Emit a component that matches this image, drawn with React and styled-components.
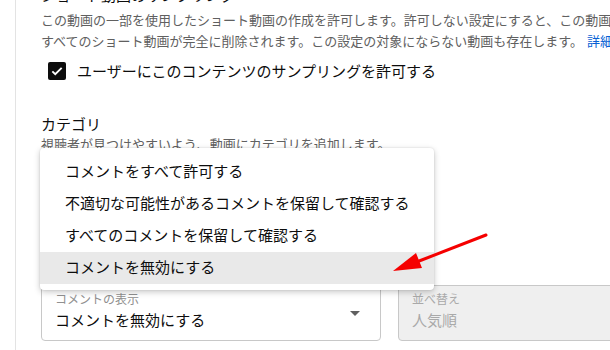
import React from 'react';
import styled, { createGlobalStyle } from 'styled-components';

const GlobalStyle = createGlobalStyle`
  html, body {
    margin: 0;
    padding: 0;
    background: #fff;
    overflow: hidden;
  }
  body {
    font-family: "Noto Sans CJK JP", "Noto Sans", sans-serif;
    color: #0d0d0d;
  }
`;

const Page = styled.div`
  position: relative;
  width: 610px;
  height: 350px;
  overflow: hidden;
`;

const Column = styled.div`
  margin-left: 15px;
  height: 100%;
  border-left: 1px solid #e3e3e3;
  padding-left: 25px;
  display: flex;
  flex-direction: column;
`;

const Heading = styled.div`
  margin-top: -17px;
  font-size: 15px;
  line-height: 24px;
  white-space: nowrap;
`;

const Description = styled.div`
  margin-top: 2px;
  font-size: 13px;
  line-height: 21px;
  color: #606060;
  white-space: nowrap;
`;

const Link = styled.a`
  color: #065fd4;
  text-decoration: none;
  margin-left: 4px;
`;

const CheckRow = styled.label`
  margin-top: 10px;
  padding-left: 7px;
  display: flex;
  align-items: center;
  gap: 11px;
  font-size: 15px;
  line-height: 20px;
`;

const CheckBox = styled.span`
  width: 18px;
  height: 18px;
  border-radius: 2px;
  background: #0d0d0d;
  display: flex;
  align-items: center;
  justify-content: center;
`;

const SectionTitle = styled.div`
  margin-top: 32px;
  font-size: 15px;
  line-height: 22px;
`;

const SectionHint = styled.div`
  font-size: 13px;
  line-height: 18px;
  color: #606060;
`;

const FieldRow = styled.div`
  margin-top: 132px;
  display: flex;
  gap: 17px;
`;

const Field = styled.div`
  position: relative;
  box-sizing: border-box;
  flex: ${({ $width }) => ($width ? `0 0 ${$width}px` : '0 0 240px')};
  height: 56px;
  border: 1px solid #c8c8c8;
  border-radius: 4px;
  padding: 5px 0 0 13px;
  background: ${({ $disabled }) => ($disabled ? '#efefef' : '#fff')};
  color: ${({ $disabled }) => ($disabled ? '#a9a9a9' : '#0d0d0d')};
`;

const FieldLabel = styled.div`
  font-size: 12px;
  line-height: 16px;
  color: ${({ $disabled }) => ($disabled ? '#a9a9a9' : '#909090')};
`;

const FieldValue = styled.div`
  margin-top: 1px;
  font-size: 15px;
  line-height: 24px;
`;

const Caret = styled.span`
  position: absolute;
  right: 20px;
  top: 25px;
  width: 0;
  height: 0;
  border-left: 5px solid transparent;
  border-right: 5px solid transparent;
  border-top: 5px solid #606060;
`;

const Menu = styled.ul`
  position: absolute;
  left: 40px;
  top: 148px;
  width: 394px;
  margin: 0;
  padding: 8px 0 6px;
  list-style: none;
  background: #fff;
  border-radius: 4px;
  box-shadow: 0 2px 6px rgba(0, 0, 0, 0.22), 0 0 2px rgba(0, 0, 0, 0.12);
`;

const MenuItem = styled.li`
  box-sizing: border-box;
  height: 32px;
  padding: 0 0 3px 25px;
  display: flex;
  align-items: center;
  font-size: 15px;
  background: ${({ $active }) => ($active ? '#e9e9e9' : 'transparent')};
`;

const Annotation = styled.svg`
  position: absolute;
  left: 0;
  top: 0;
  pointer-events: none;
`;

const options = [
  'コメントをすべて許可する',
  '不適切な可能性があるコメントを保留して確認する',
  'すべてのコメントを保留して確認する',
  'コメントを無効にする',
];

const App = () => (
  <Page>
    <GlobalStyle />
    <Column>
      <Heading>ショート動画のサンプリング</Heading>
      <Description>
        この動画の一部を使用したショート動画の作成を許可します。許可しない設定にすると、この動画の一部を使用した
        <br />
        すべてのショート動画が完全に削除されます。この設定の対象にならない動画も存在します。
        <Link href="#">詳細</Link>
      </Description>
      <CheckRow>
        <CheckBox>
          <svg width="14" height="14" viewBox="0 0 24 24">
            <path d="M4 12.5l5 5L20 6.5" fill="none" stroke="#fff" strokeWidth="3.2" />
          </svg>
        </CheckBox>
        ユーザーにこのコンテンツのサンプリングを許可する
      </CheckRow>
      <SectionTitle>カテゴリ</SectionTitle>
      <SectionHint>視聴者が見つけやすいよう、動画にカテゴリを追加します。</SectionHint>
      <FieldRow>
        <Field $width={340}>
          <FieldLabel>コメントの表示</FieldLabel>
          <FieldValue>コメントを無効にする</FieldValue>
          <Caret />
        </Field>
        <Field $width={240} $disabled>
          <FieldLabel $disabled>並べ替え</FieldLabel>
          <FieldValue>人気順</FieldValue>
        </Field>
      </FieldRow>
    </Column>
    <Menu>
      {options.map((o, i) => (
        <MenuItem key={o} $active={i === options.length - 1}>
          {o}
        </MenuItem>
      ))}
    </Menu>
    <Annotation width="610" height="350">
      <line x1="486" y1="235" x2="414" y2="263" stroke="#f50000" strokeWidth="3" strokeLinecap="round" />
      <polygon points="393,271 416,253 422,268" fill="#f50000" />
    </Annotation>
  </Page>
);

export default App;
